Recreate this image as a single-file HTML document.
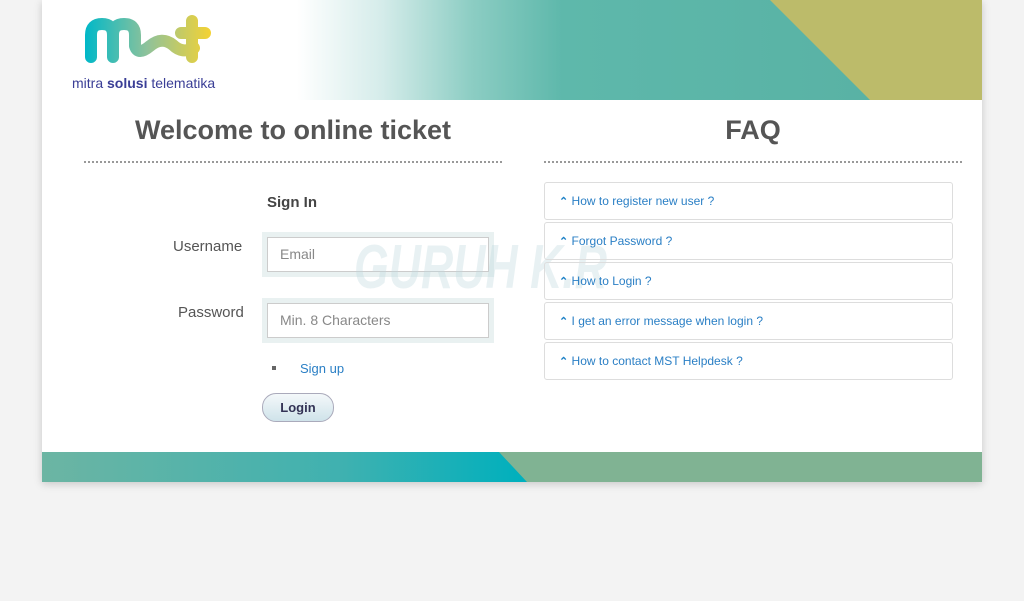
<!DOCTYPE html>
<html><head><meta charset="utf-8"><style>
body{margin:0;background:#f3f3f3;font-family:"Liberation Sans",sans-serif;width:1024px;height:601px;overflow:hidden}
#c{position:absolute;left:42px;top:0;width:940px;height:482px;background:#fff;box-shadow:0 2px 8px rgba(0,0,0,.18)}
#hd{position:absolute;left:0;top:0;width:940px;height:100px;background:linear-gradient(90deg,#fff 0,#fff 255px,#d5ecea 340px,#8ccdc3 430px,#5eb8ab 520px,#57b0a2 940px)}
#ft{position:absolute;left:0;top:452px;width:940px;height:30px;background:linear-gradient(90deg,#6cb5a3,#3fb1b0 300px,#00b0bd 480px)}
h2{position:absolute;margin:0;font-size:27px;color:#555;font-weight:bold;text-align:center}
.dot{position:absolute;top:161px;height:0;border-top:2px dotted #999}
.lbl{position:absolute;font-size:15px;color:#555}
.in{position:absolute;left:220px;width:232px;height:45px;background:#e9f1f1}
.in div{position:absolute;left:5px;top:5px;width:208px;height:33px;border:1px solid #ccc;background:#fff;font-size:14px;color:#888;line-height:33px;padding-left:12px}
.q{position:absolute;left:502px;width:393px;height:36px;border:1px solid #ddd;border-radius:3px;font-size:12px;color:#2a7fc5;line-height:36px;padding-left:14px}
.q b{color:#1a7fc5;font-size:11px}
</style></head><body>
<div id="c">
<div id="hd">
<svg width="940" height="100" style="position:absolute;left:0;top:0">
<polygon points="728,0 940,0 940,100 828,100" fill="#bcbb6a"/>
<defs><linearGradient id="g" gradientUnits="userSpaceOnUse" x1="43" y1="0" x2="168" y2="0"><stop offset="0" stop-color="#00b8c8"/><stop offset=".5" stop-color="#8fc29a"/><stop offset="1" stop-color="#f3d235"/></linearGradient></defs>
<g fill="none" stroke="url(#g)" stroke-width="12" stroke-linecap="round" stroke-linejoin="round">
<path d="M49,57 V35 Q49,24 60,24 Q71,24 71,35 V57 M71,35 Q71,24 82,24 Q93,24 93,35 V46 Q96,56 108,46 Q120,36 131,45 Q140,54 152,48"/>
<path d="M150,21 V57 M139,33 H163"/>
</g>
<text x="30" y="88" font-size="14" fill="#3a3e96" font-family="Liberation Sans">mitra <tspan font-weight="bold">solusi</tspan> telematika</text>
</svg>
</div>
<h2 style="left:42px;top:115px;width:418px">Welcome to online ticket</h2>
<h2 style="left:502px;top:115px;width:418px">FAQ</h2>
<div class="dot" style="left:42px;width:418px"></div>
<div class="dot" style="left:502px;width:418px"></div>
<div style="position:absolute;left:225px;top:194px;font-size:15px;font-weight:bold;color:#444">Sign In</div>
<div class="lbl" style="left:131px;top:238px">Username</div>
<div class="lbl" style="left:136px;top:304px">Password</div>
<div class="in" style="top:232px"><div>Email</div></div>
<div class="in" style="top:298px"><div>Min. 8 Characters</div></div>
<div style="position:absolute;left:312px;top:232px;font-size:62px;font-style:italic;font-weight:bold;color:rgba(190,215,220,.35);transform:scaleX(.72);transform-origin:0 0;white-space:nowrap">GURUH K.R</div>
<div style="position:absolute;left:230px;top:366px;width:4px;height:4px;background:#666"></div>
<div style="position:absolute;left:258px;top:361px;font-size:13px;color:#2a7fc5">Sign up</div>
<div style="position:absolute;left:220px;top:393px;width:70px;height:27px;border:1px solid #aab;border-radius:14px;background:linear-gradient(#f4f8fa,#cfe3ea);font-size:13px;font-weight:bold;color:#335;text-align:center;line-height:27px">Login</div>
<div class="q" style="top:182px"><b>⌃</b> How to register new user ?</div>
<div class="q" style="top:222px"><b>⌃</b> Forgot Password ?</div>
<div class="q" style="top:262px"><b>⌃</b> How to Login ?</div>
<div class="q" style="top:302px"><b>⌃</b> I get an error message when login ?</div>
<div class="q" style="top:342px"><b>⌃</b> How to contact MST Helpdesk ?</div>
<div id="ft"><svg width="940" height="30" style="position:absolute;left:0;top:0"><polygon points="457,0 940,0 940,30 485,30" fill="#80b393"/></svg></div>
</div>
</body></html>
